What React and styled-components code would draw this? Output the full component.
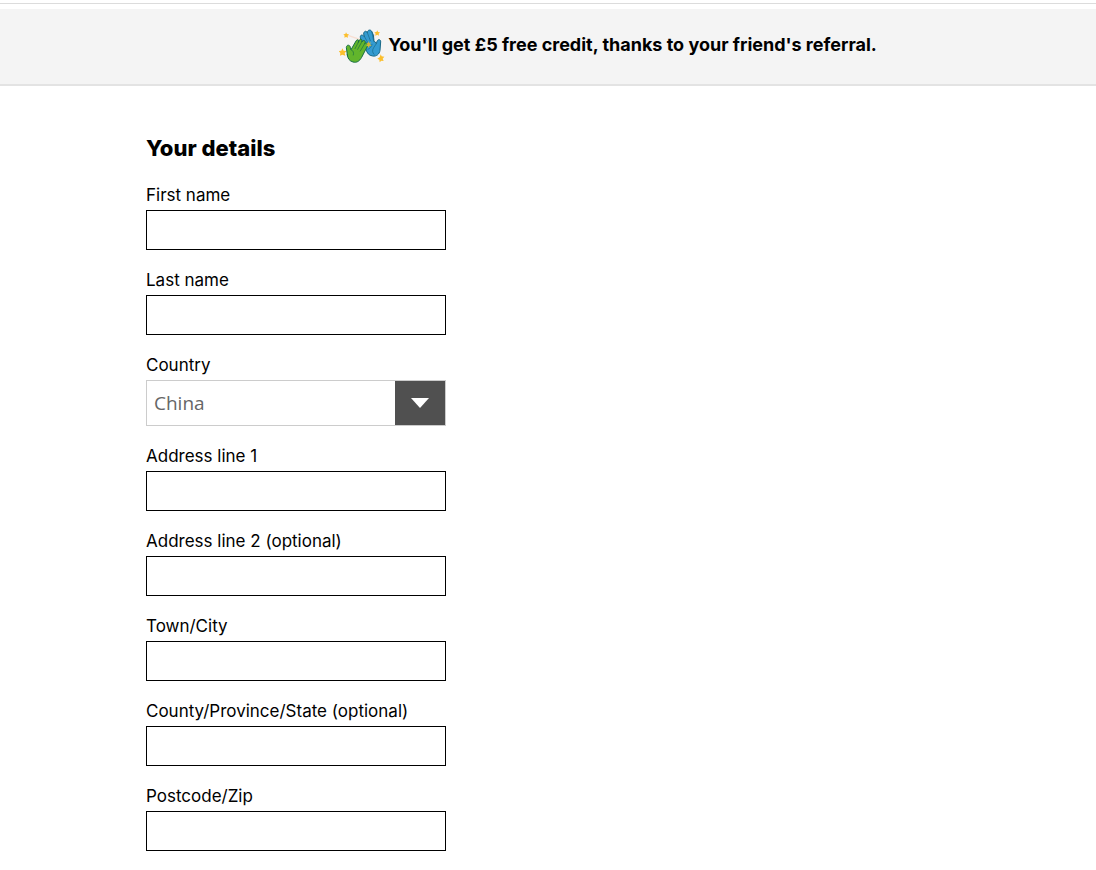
import React from "react";
import styled, { createGlobalStyle } from "styled-components";

const GlobalStyle = createGlobalStyle`
  *, *::before, *::after { box-sizing: border-box; }
  body {
    margin: 0;
    background: #fff;
    color: #000;
    font-family: Inter, "Liberation Sans", sans-serif;
    font-size: 17px;
    line-height: 20px;
  }
`;

const TopRule = styled.div`
  margin-top: 3px;
  border-top: 1px solid #dcdcdc;
`;

const Banner = styled.aside`
  display: flex;
  align-items: center;
  justify-content: center;
  gap: 3px;
  height: 77px;
  margin-top: 5px;
  padding-left: 120px;
  background: #f4f4f4;
  border-bottom: 2px solid #e3e3e3;
`;

const BannerText = styled.p`
  margin: 0;
  padding-bottom: 3px;
  font-size: 18px;
  font-weight: 700;
`;

const HandsIcon = styled.svg`
  flex: none;
  width: 46px;
  height: 36px;
`;

const Form = styled.form`
  display: flex;
  flex-direction: column;
  gap: 20px;
  width: 100%;
  max-width: 844px;
  margin: 0 auto;
  padding: 48px 20px 16px;
`;

const Title = styled.h1`
  margin: 0 0 2px;
  font-size: 22px;
  font-weight: 800;
  line-height: 29px;
`;

const Field = styled.div`
  display: flex;
  flex-direction: column;
  gap: 5px;
  width: 100%;
  max-width: 300px;
`;

const Label = styled.label`
  align-self: flex-start;
`;

const TextInput = styled.input`
  width: 100%;
  height: 40px;
  padding: 0 8px;
  border: 1px solid #000;
  border-radius: 0;
  background: #fff;
  font: inherit;
`;

const SelectFrame = styled.div`
  display: grid;
  grid-template-columns: 1fr 50px;
  height: 46px;
  border: 1px solid #ccc;
`;

const Select = styled.select`
  grid-area: 1 / 1 / 2 / 3;
  width: 100%;
  padding: 0 58px 0 7px;
  border: 0;
  border-radius: 0;
  appearance: none;
  background: #fff;
  color: #666;
  font-family: "Open Sans", "Noto Sans", sans-serif;
  font-size: 19px;
`;

const Arrow = styled.span`
  grid-area: 1 / 2;
  display: flex;
  align-items: center;
  justify-content: center;
  background: #505050;
  pointer-events: none;
`;

function Hands() {
  return (
    <HandsIcon viewBox="27 27 138 108" aria-hidden="true">
      <path d="M54 46L94 60M137 41L119 70" stroke="#f7dfd3" strokeWidth="4" />
      <g fill="#fbbf2d">
        <path d="M48 37l3 5 6 1-4 4 1 6-6-2-5 2 1-6-4-4 6-1z" />
        <path d="M142 31l2 5 6 1-4 4 1 6-5-3-6 3 1-6-4-4 6-1z" />
        <path d="M37 85l4 7 9 1-6 6 2 8-9-3-7 3 1-8-5-6 8-1z" />
        <path d="M152 103l3 6 8 1-5 6 3 7-7-1-5 5-1-8-6-3 7-4z" />
      </g>
      <g strokeWidth="3" strokeLinejoin="round" strokeLinecap="round">
        <path
          d="M92 57C88 47 94 42 100 47L103 49 101 42C101 33 109 31 112 38C112 29 123 27 126 36L130 45 132 62 139 71 141 64C144 56 153 58 152 66L150 91C148 103 139 110 128 108 117 107 111 99 108 89Z"
          fill="#349bd0"
          stroke="#176887"
        />
        <path d="M103 49l10 18M112 38l9 24M126 36l5 28M139 71l-8 12c-5 8-4 15 1 20M114 88c7-3 11-8 12-15" fill="none" stroke="#176887" strokeWidth="2" />
        <path
          d="M52 105L49 82C50 73 60 74 61 82L63 89 78 63C82 56 89 60 85 67L86 63C91 54 99 58 95 66L97 64C102 58 109 64 104 71L105 70C111 66 116 72 112 79L95 112C88 124 80 129 69 126 58 123 53 115 52 105Z"
          fill="#62b52c"
          stroke="#176d43"
        />
        <path d="M85 67L75 86M95 66L83 88M104 71L91 93M63 89c7 3 9 9 7 16" fill="none" stroke="#176d43" strokeWidth="2" />
      </g>
      <path d="M115 63l3 6 5-2-3 6 5 4-7 1-2 6-3-6-5 0 4-4-2-6 4 2z" fill="#d3b43d" />
    </HandsIcon>
  );
}

function TextField({ id, label, autoComplete }) {
  return (
    <Field>
      <Label htmlFor={id}>{label}</Label>
      <TextInput id={id} name={id} type="text" autoComplete={autoComplete} />
    </Field>
  );
}

export default function App() {
  return (
    <>
      <GlobalStyle />
      <TopRule />
      <Banner>
        <Hands />
        <BannerText>You'll get £5 free credit, thanks to your friend's referral.</BannerText>
      </Banner>
      <main>
        <Form>
          <Title>Your details</Title>
          <TextField id="first-name" label="First name" autoComplete="given-name" />
          <TextField id="last-name" label="Last name" autoComplete="family-name" />
          <Field>
            <Label htmlFor="country">Country</Label>
            <SelectFrame>
              <Select id="country" name="country" defaultValue="China">
                <option>China</option>
              </Select>
              <Arrow>
                <svg width="18" height="10" viewBox="0 0 18 10" aria-hidden="true">
                  <path d="M0 0H18L9 10Z" fill="#fff" />
                </svg>
              </Arrow>
            </SelectFrame>
          </Field>
          <TextField id="address-1" label="Address line 1" autoComplete="address-line1" />
          <TextField id="address-2" label="Address line 2 (optional)" autoComplete="address-line2" />
          <TextField id="city" label="Town/City" autoComplete="address-level2" />
          <TextField id="region" label="County/Province/State (optional)" autoComplete="address-level1" />
          <TextField id="postcode" label="Postcode/Zip" autoComplete="postal-code" />
        </Form>
      </main>
    </>
  );
}
